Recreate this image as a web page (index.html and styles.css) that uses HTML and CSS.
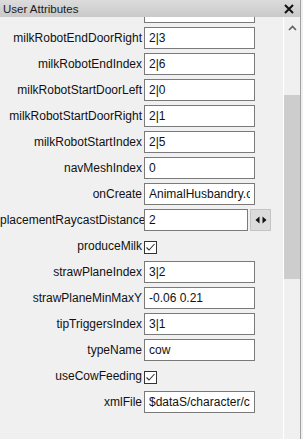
FILE: index.html
```html
<!DOCTYPE html>
<html lang="en">
<head>
  <meta charset="UTF-8">
  <meta name="viewport" content="width=device-width, initial-scale=1.0">
  <title>User Attributes</title>
  <link rel="stylesheet" href="styles.css">
</head>
<body>
  <div class="panel">
    <header class="titlebar">
      <span class="title">User Attributes</span>
      <svg class="close" width="10" height="10" viewBox="0 0 10 10">
        <path d="M1 1 L9 9 M9 1 L1 9" stroke="#111" stroke-width="2" fill="none"/>
      </svg>
    </header>

    <div class="body">
      <div class="rows">
        <div class="row"><label></label><input class="field" value=""></div>
        <div class="row"><label>milkRobotEndDoorRight</label><input class="field" value="2|3"></div>
        <div class="row"><label>milkRobotEndIndex</label><input class="field" value="2|6"></div>
        <div class="row"><label>milkRobotStartDoorLeft</label><input class="field" value="2|0"></div>
        <div class="row"><label>milkRobotStartDoorRight</label><input class="field" value="2|1"></div>
        <div class="row"><label>milkRobotStartIndex</label><input class="field" value="2|5"></div>
        <div class="row"><label>navMeshIndex</label><input class="field" value="0"></div>
        <div class="row"><label>onCreate</label><input class="field" value="AnimalHusbandry.onCreate"></div>
        <div class="row">
          <label>placementRaycastDistance</label>
          <div class="spin">
            <input class="field short" value="2">
            <button class="spin-btn">
              <svg width="12" height="8" viewBox="0 0 12 8">
                <path d="M4.5 0.5 L0.5 4 L4.5 7.5 Z M7.5 0.5 L11.5 4 L7.5 7.5 Z" fill="#111"/>
              </svg>
            </button>
          </div>
        </div>
        <div class="row">
          <label>produceMilk</label>
          <svg class="check" width="13" height="13" viewBox="0 0 13 13">
            <rect x="0.5" y="0.5" width="12" height="12" fill="#fff" stroke="#333"/>
            <path d="M2.5 6.5 L5 9 L10.5 3" stroke="#333" stroke-width="1.1" fill="none"/>
          </svg>
        </div>
        <div class="row"><label>strawPlaneIndex</label><input class="field" value="3|2"></div>
        <div class="row"><label>strawPlaneMinMaxY</label><input class="field" value="-0.06 0.21"></div>
        <div class="row"><label>tipTriggersIndex</label><input class="field" value="3|1"></div>
        <div class="row"><label>typeName</label><input class="field" value="cow"></div>
        <div class="row">
          <label>useCowFeeding</label>
          <svg class="check" width="13" height="13" viewBox="0 0 13 13">
            <rect x="0.5" y="0.5" width="12" height="12" fill="#fff" stroke="#333"/>
            <path d="M2.5 6.5 L5 9 L10.5 3" stroke="#333" stroke-width="1.1" fill="none"/>
          </svg>
        </div>
        <div class="row"><label>xmlFile</label><input class="field" value="$dataS/character/cow/cow.xml"></div>
      </div>

      <div class="scrollbar">
        <svg class="arrow" width="9" height="6" viewBox="0 0 9 6">
          <path d="M1 5 L4.5 1.5 L8 5" stroke="#606060" stroke-width="1.6" fill="none"/>
        </svg>
        <div class="thumb"></div>
      </div>
    </div>
  </div>
</body>
</html>
```

FILE: styles.css
```css
body {
  margin: 0;
  padding: 0;
  background-color: #f0f0f0;
  font-family: 'Liberation Sans', Arial, sans-serif;
  font-size: 12px;
  color: #111;
}
.panel {
  width: 300px;
  height: 439px;
  border-right: 1px solid #a0a0a0;
  display: flex;
  flex-direction: column;
  overflow: hidden;
}
.titlebar {
  height: 17px;
  flex: none;
  display: flex;
  align-items: center;
  justify-content: space-between;
  padding: 0 6px 0 3px;
  background: linear-gradient(#dcdcdc, #c9c9c9);
  position: relative;
  z-index: 1;
}
.title {
  font-size: 11.5px;
  color: #1a1a1a;
}
.body {
  flex: 1;
  display: flex;
  min-height: 0;
}
.rows {
  flex: 1;
  margin-top: -18px;
  overflow: hidden;
}
.row {
  height: 26px;
  display: grid;
  grid-template-columns: 142px 1fr;
  align-items: center;
  column-gap: 2px;
}
.row label {
  text-align: right;
  white-space: nowrap;
  color: #111;
}
.field {
  box-sizing: border-box;
  width: 111px;
  height: 22px;
  margin: 0;
  padding: 0 4px;
  border: 1px solid #7a7a7a;
  background-color: #fff;
  font-family: 'Liberation Sans', Arial, sans-serif;
  font-size: 12px;
  color: #111;
  outline: none;
}
.spin {
  display: flex;
  align-items: center;
  gap: 2px;
}
.field.short {
  width: 104px;
}
.spin-btn {
  width: 21px;
  height: 22px;
  padding: 0;
  border: 1px solid #c4c4c4;
  background-color: #dcdcdc;
  display: flex;
  align-items: center;
  justify-content: center;
}
.check {
  display: block;
  margin-top: 2px;
}
.scrollbar {
  width: 16px;
  flex: none;
  border-left: 1px solid #fff;
  display: flex;
  flex-direction: column;
  align-items: center;
}
.arrow {
  margin-top: 8px;
}
.thumb {
  width: 16px;
  height: 184px;
  margin-top: 64px;
  background-color: #cdcdcd;
}
```
